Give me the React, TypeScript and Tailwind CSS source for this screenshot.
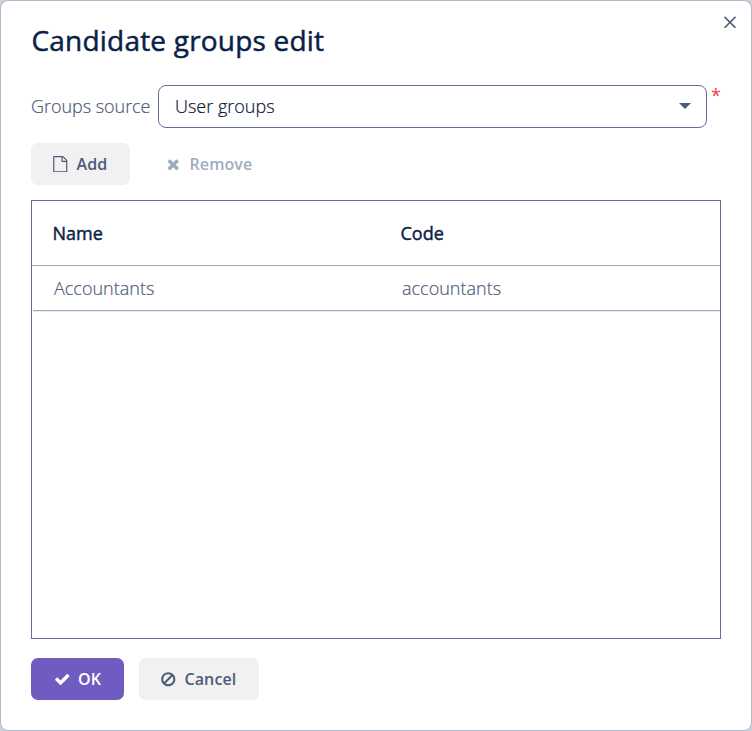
import React from 'react';
import type { ReactNode } from 'react';

const icons = {
  file: 'M1596 380q28 28 48 76t20 88v1152q0 40-28 68t-68 28h-1344q-40 0-68-28t-28-68v-1600q0-40 28-68t68-28h896q40 0 88 20t76 48zm-444-244v376h376q-10-29-22-41l-313-313q-12-12-41-22zm384 1528v-1024h-416q-40 0-68-28t-28-68v-416h-768v1536h1280z',
  times: 'M1490 1322q0 40-28 68l-136 136q-28 28-68 28t-68-28l-294-294-294 294q-28 28-68 28t-68-28l-136-136q-28-28-28-68t28-68l294-294-294-294q-28-28-28-68t28-68l136-136q28-28 68-28t68 28l294 294 294-294q28-28 68-28t68 28l136 136q28 28 28 68t-28 68l-294 294 294 294q28 28 28 68z',
  check: 'M1671 566q0 40-28 68l-724 724-136 136q-28 28-68 28t-68-28l-136-136-362-362q-28-28-28-68t28-68l136-136q28-28 68-28t68 28l294 295 656-657q28-28 68-28t68 28l136 136q28 28 28 68z',
  ban: 'M1440 893q0-161-87-295l-754 753q137 89 297 89 111 0 211.500-43.500t173.500-116.500 116-174.500 43-212.500zm-999 299l755-754q-135-91-300-91-148 0-273 73t-198 199-73 274q0 162 89 299zm1223-299q0 157-61 300t-163.500 246-245 164-298.500 61-298.500-61-245-164-163.500-246-61-300 61-299.500 163.500-245.500 245-164 298.500-61 298.500 61 245 164 163.500 245.500 61 299.500z',
};

function Icon({ name }: { name: keyof typeof icons }) {
  return (
    <svg viewBox="0 0 1792 1792" className="size-[16.500px] shrink-0" fill="currentColor" aria-hidden="true">
      <path d={icons[name]} />
    </svg>
  );
}

function Button({ icon, className, children }: { icon: keyof typeof icons; className: string; children: ReactNode }) {
  return (
    <button className={`flex h-[42px] items-center gap-2 rounded-[7px] text-base font-semibold tracking-[0.1px] ${className}`}>
      <Icon name={icon} />
      <span>{children}</span>
    </button>
  );
}

export default function App() {
  return (
    <div className="h-[731px] w-[752px] bg-[#cdd1dc] font-['Open_Sans',sans-serif]">
      <div className="flex h-full flex-col rounded-lg border border-[#b4b9c9] bg-white px-[30px] text-[#4d5b78]">
        <header className="flex h-[84px] justify-between">
          <h1 className="mt-[19px] ml-[0.5px] text-[28px] leading-10 tracking-[0.2px] text-[#0b1f47] [-webkit-text-stroke:0.5px_currentColor]">Candidate groups edit</h1>
          <button aria-label="Close" className="-mr-[15px] mt-[15px] size-3">
            <svg viewBox="0 0 12 12" className="size-3" stroke="currentColor" strokeWidth="1.6">
              <path d="M.5.8l11 11M11.500.8l-11 11" />
            </svg>
          </button>
        </header>
        <div className="flex h-[43px] items-center">
          <label className="w-[127px] text-[18px] font-light tracking-[-0.04px] whitespace-nowrap [-webkit-text-stroke:0.2px_currentColor]">Groups source</label>
          <div className="flex h-[43px] w-[549px] items-center justify-between rounded-lg border border-[#5e7194] pr-[15px] pl-4 text-[18px] font-light text-[#0b1633]">
            <span className="[-webkit-text-stroke:0.2px_currentColor]">User groups</span>
            <svg viewBox="0 0 12 6" className="mb-0.5 h-1.5 w-3" fill="#4d5b78">
              <path d="M0 0h12L6 6z" />
            </svg>
          </div>
          <span className="ml-1 self-start text-[18px] leading-[21px] text-[#f0433a]">*</span>
        </div>
        <div className="mt-[15px] flex">
          <Button icon="file" className="w-[99px] bg-[#f1f1f1] pl-[21px]">Add</Button>
          <Button icon="times" className="pl-[35px] text-[#a0abc2]">Remove</Button>
        </div>
        <div className="mt-[15px] h-[439px] w-[690px] border border-[#5e7194]">
          <div className="grid h-[65px] grid-cols-[348px_1fr] items-center border-b border-[#9da8bf] pl-[20.500px] text-[18px] text-[#0b1f47] [-webkit-text-stroke:0.45px_currentColor]">
            <span>Name</span>
            <span>Code</span>
          </div>
          <div className="ml-px grid h-[45px] grid-cols-[348px_1fr] items-center border-b border-[#9da8bf] pl-[21px] text-[18px] font-light shadow-[0_1px_0_#e9ecf2] [-webkit-text-stroke:0.2px_currentColor]">
            <span>Accountants</span>
            <span>accountants</span>
          </div>
        </div>
        <footer className="mt-[19px] flex gap-[15px]">
          <Button icon="check" className="w-[93px] bg-[#705cc0] pl-[22.500px] text-white">OK</Button>
          <Button icon="ban" className="w-[120px] bg-[#f1f1f1] pl-[21px]">Cancel</Button>
        </footer>
      </div>
    </div>
  );
}
